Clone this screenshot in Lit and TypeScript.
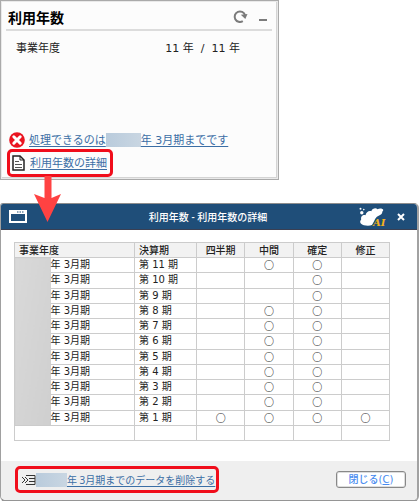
import { LitElement, html, css } from "lit";
import { customElement } from "lit/decorators.js";

const shared = css`
  :host {
    display: block;
    font-family: "DejaVu Sans", "Noto Sans CJK JP", sans-serif;
    color: #222;
  }
  * {
    box-sizing: border-box;
  }
  a {
    color: #3b6ea5;
    text-decoration: underline;
    text-underline-offset: 2px;
    text-decoration-thickness: 1px;
  }
  button {
    font-family: inherit;
    margin: 0;
    padding: 0;
    border: 0;
    background: none;
  }
  svg {
    display: block;
    flex: none;
  }
  .mask {
    display: inline-block;
    background: linear-gradient(90deg, #b9cbdc, #c9d6e2);
  }
`;

@customElement("usage-panel")
export class UsagePanel extends LitElement {
  static styles = [
    shared,
    css`
      .panel {
        display: flex;
        flex-direction: column;
        max-width: 279px;
        min-height: 180px;
        padding: 3px 4px 0 4px;
        background: #fcfcfc;
        border: 1px solid #aaa;
        box-shadow: inset 0 0 0 1px #e9e9e9, inset -1px -1px 0 1px #d4d4d4;
      }
      .head {
        display: flex;
        align-items: center;
        height: 27px;
        margin: 0 2px 0 1px;
        padding: 0 5px 0 2px;
        border-bottom: 2px solid #dcdcdc;
      }
      h1 {
        flex: 1;
        margin: 0;
        font-family: "Noto Sans CJK JP", sans-serif;
        font-size: 14px;
        line-height: 20px;
        font-weight: 700;
        color: #000;
      }
      .head button {
        margin-left: 11px;
      }
      .years {
        display: flex;
        justify-content: space-between;
        margin: 10px 34px 0 11px;
        font-size: 11px;
        line-height: 16px;
      }
      .years span {
        white-space: pre;
      }
      .links {
        margin-top: auto;
        padding: 0 0 2px 2px;
        font-size: 11px;
        line-height: 16px;
      }
      .row {
        display: flex;
        align-items: center;
        gap: 4px;
        padding-left: 2px;
      }
      .row a {
        display: flex;
        padding-top: 2px;
        white-space: pre;
      }
      .row .mask {
        width: 35px;
        height: 14px;
      }
      .marked {
        position: relative;
        width: 106px;
        height: 28px;
        border: 3px solid #f00d1b;
        border-radius: 5px;
        padding-left: 2px;
        gap: 5px;
        white-space: nowrap;
      }
      .arrow {
        position: absolute;
        left: 24px;
        top: 24px;
        z-index: 2;
      }
    `,
  ];

  render() {
    return html`
      <section class="panel">
        <header class="head">
          <h1>利用年数</h1>
          <button aria-label="更新">
            <svg width="15" height="15" viewBox="0 0 15 15">
              <path d="M9.800 12.200A5.300 5.300 0 1 1 12 6" fill="none" stroke="#7b7b7b" stroke-width="2" />
              <path d="M7.800 5.800l6.700-.8-2.200 5z" fill="#7b7b7b" />
            </svg>
          </button>
          <button aria-label="最小化">
            <svg width="8" height="15" viewBox="0 0 8 15">
              <path d="M0 11h8" stroke="#7b7b7b" stroke-width="2" />
            </svg>
          </button>
        </header>
        <div class="years"><span>事業年度</span><span>11 年  /  11 年</span></div>
        <div class="links">
          <div class="row">
            <svg width="16" height="16" viewBox="0 0 16 16">
              <circle cx="8" cy="8" r="7.800" fill="#ea1420" />
              <path d="M4.800 4.800l6.400 6.400M11.200 4.800l-6.400 6.400" stroke="#fff" stroke-width="3" stroke-linecap="round" />
            </svg>
            <a href="#limit">処理できるのは<span class="mask"></span>年 3月期までです</a>
          </div>
          <div class="row marked">
            <svg width="13" height="16" viewBox="0 0 13 16">
              <path d="M1 1h7l4 4v10H1z" fill="#fff" stroke="#222" stroke-width="1.500" />
              <path d="M8 1v4h4" fill="none" stroke="#222" />
              <path d="M3 6.500h4M3 9.500h7M3 12.500h7" stroke="#555" />
            </svg>
            <a href="#detail">利用年数の詳細</a>
            <svg class="arrow" width="28" height="47" viewBox="0 0 28 47">
              <path d="M10.500 0h7v22l9.500-4-13.500 28L0 18l10.500 4z" fill="#ff4242" />
            </svg>
          </div>
        </div>
      </section>
    `;
  }
}

@customElement("detail-dialog")
export class DetailDialog extends LitElement {
  static styles = [
    shared,
    css`
      .dialog {
        display: flex;
        flex-direction: column;
        min-height: 298px;
        border: 1px solid #8d8d8d;
        border-left-color: #a0a0a0;
        border-right: 2px solid #a2a2a2;
        border-bottom: 2px solid #959595;
        border-radius: 3px 5px 6px 6px;
        background: #fff;
        overflow: hidden;
        font-size: 10px;
        line-height: 14px;
      }
      .bar {
        display: grid;
        grid-template-columns: 1fr auto 1fr;
        align-items: center;
        height: 26px;
        padding: 0 10px 0 8px;
        background: #1f4e79;
        border-bottom: 1px solid #3a3f52;
        color: #fff;
      }
      h2 {
        margin: 0;
        font-family: "Noto Sans", "Noto Sans CJK JP", sans-serif;
        font-size: 10px;
        line-height: 14px;
        font-weight: 500;
      }
      .tools {
        display: flex;
        justify-content: flex-end;
        align-items: center;
        gap: 11px;
        padding-right: 2px;
      }
      .body {
        flex: 1;
        padding: 12px 27px 20px 13px;
      }
      table {
        width: 100%;
        height: 199px;
        table-layout: fixed;
        border-collapse: collapse;
      }
      .cmask {
        width: 36px;
      }
      .cyear {
        width: 84px;
      }
      .cterm {
        width: 62px;
      }
      th,
      td {
        height: 15px;
        padding: 0;
        border: 1px solid #ccc;
        line-height: 14px;
        font-weight: 400;
        text-align: center;
        white-space: nowrap;
      }
      th {
        background: #f2f2f2;
        font-family: "Noto Sans", "Noto Sans CJK JP", sans-serif;
        font-weight: 500;
      }
      .left {
        padding-left: 4px;
        text-align: left;
      }
      .hidden {
        background: linear-gradient(100deg, #d9d9d9, #cfcfcf);
        border-right: 0;
      }
      .year {
        text-align: left;
        border-left: 0;
      }
      .flag {
        font-family: "Noto Sans CJK JP", sans-serif;
        font-weight: 700;
      }
      .foot {
        display: flex;
        justify-content: space-between;
        align-items: center;
        height: 39px;
        padding: 0 11px 2px 14px;
        background: #efefef;
      }
      .marked {
        display: flex;
        align-items: center;
        height: 27px;
        padding: 0 1px 0 3px;
        border: 3px solid #f00d1b;
        border-radius: 5px;
        white-space: nowrap;
      }
      .marked a {
        display: flex;
        font-family: "Noto Sans", "Noto Sans CJK JP", sans-serif;
      }
      .marked .mask {
        width: 31px;
        height: 14px;
      }
      .close {
        width: 70px;
        height: 17px;
        border: 1px solid #888;
        border-radius: 3px;
        background: #fff;
        box-shadow: inset 0 0 0 1px #ddd;
        color: #4a8cf0;
        font-size: 10px;
        font-weight: 500;
        line-height: 13px;
      }
    `,
  ];

  private rows = Array.from({ length: 11 }, (_, i) => 11 - i);

  private mark(shown: boolean) {
    return html`<td class="flag">${shown ? "○" : ""}</td>`;
  }

  render() {
    return html`
      <section class="dialog" role="dialog" aria-labelledby="title">
        <header class="bar">
          <svg width="18" height="13" viewBox="0 0 18 13">
            <path d="M1 1h16v11H1zM1 3h16" fill="none" stroke="#fff" stroke-width="2" />
            <path d="M8 2h7" stroke="#1f4e79" stroke-width="1.200" stroke-dasharray="1.500 1" />
          </svg>
          <h2 id="title">利用年数 - 利用年数の詳細</h2>
          <div class="tools">
            <svg width="27" height="20" viewBox="0 0 27 20">
              <path
                d="M2.200 12.500C1.500 9.500 4 7.500 6.500 8.300 7 5 10 3.200 12.300 4.200 13.500 1.200 17 .6 18.500 2.300c2-1.500 5.200-1 5.800.6-.2 1-1.300 1.600-1.100 2.900-.6 2.200-4.200 2.700-6 4.700-1.700 2-2.200 4.500-4.200 7.500-3 1.200-9 .8-11.200-1.500-1.300-1.500-.3-3.200.4-4z"
                fill="#fff"
              />
              <circle cx="2.800" cy="5.800" r="1.700" fill="#fff" />
              <circle cx="1.500" cy="1.700" r="1" fill="#fff" />
              <circle cx="4.800" cy="2.600" r=".8" fill="#fff" />
              <text x="14" y="18.500" font-family="DejaVu Serif, serif" font-size="10" font-weight="700" font-style="italic" fill="#f3b21b" stroke="#1f4e79" stroke-width="1" paint-order="stroke">AI</text>
            </svg>
            <button aria-label="閉じる">
              <svg width="8" height="8" viewBox="0 0 8 8">
                <path d="M1 1l6 6M7 1L1 7" stroke="#fff" stroke-width="2" />
              </svg>
            </button>
          </div>
        </header>
        <div class="body">
          <table>
            <colgroup>
              <col class="cmask" /><col class="cyear" /><col class="cterm" />
              <col /><col /><col /><col />
            </colgroup>
            <thead>
              <tr>
                <th class="left" colspan="2">事業年度</th>
                <th class="left">決算期</th>
                <th>四半期</th>
                <th>中間</th>
                <th>確定</th>
                <th>修正</th>
              </tr>
            </thead>
            <tbody>
              ${this.rows.map(
                (n, i) => html`<tr>
                  ${i === 0 ? html`<td class="hidden" rowspan="11"></td>` : ""}
                  <td class="year">年 3月期</td>
                  <td class="left">第 ${n} 期</td>
                  ${this.mark(n === 1)}${this.mark(n === 11 || n < 9)}${this.mark(true)}${this.mark(n === 1)}
                </tr>`
              )}
              <tr>
                <td colspan="2"></td>
                <td></td><td></td><td></td><td></td><td></td>
              </tr>
            </tbody>
          </table>
        </div>
        <footer class="foot">
          <div class="marked">
            <svg width="15" height="12" viewBox="0 0 15 12">
              <path d="M1 3l3 3-3 3M4 3l3 3-3 3" fill="none" stroke="#333" />
              <path d="M5 1.500h9v9H5M8 4.500h6M8 7.500h6" fill="none" stroke="#333" />
            </svg>
            <a href="#delete"><span class="mask"></span>年 3月期までのデータを削除する</a>
          </div>
          <button class="close">閉じる(<u>C</u>)</button>
        </footer>
      </section>
    `;
  }
}

@customElement("app-root")
export class AppRoot extends LitElement {
  static styles = css`
    :host {
      display: flex;
      flex-direction: column;
      gap: 23px;
      background: #fff;
    }
  `;

  render() {
    return html`<usage-panel></usage-panel><detail-dialog></detail-dialog>`;
  }
}
